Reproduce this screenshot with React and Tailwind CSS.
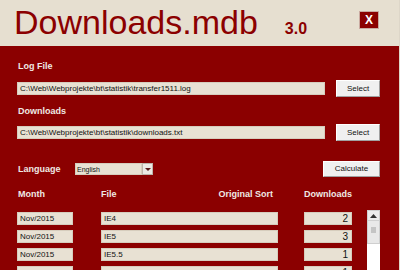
import React from "react";

const font = { fontFamily: '"Liberation Sans", Arial, sans-serif' };

function Btn({ children, w }) {
  return (
    <div
      className={`${w} h-[17px] flex items-center justify-center bg-[#f0f0f0] border border-t-[#ffffff] border-l-[#ffffff] border-r-[#a0a0a0] border-b-[#a0a0a0] text-[8px] text-[#111] leading-none`}
    >
      {children}
    </div>
  );
}

function Field({ children, w, right }) {
  return (
    <div
      className={`${w} h-[13px] bg-[#e8e1d3] border border-[#d6cdbd] flex items-center ${right ? "justify-end pr-[3px]" : "pl-[2px]"} text-[8px] text-[#111] leading-none overflow-hidden whitespace-nowrap`}
    >
      {children}
    </div>
  );
}

const rows = [
  ["Nov/2015", "IE4", "2"],
  ["Nov/2015", "IE5", "3"],
  ["Nov/2015", "IE5.5", "1"],
  ["Nov/2015", "IE6", "1"],
];

export default function App() {
  return (
    <div className="w-[400px] h-[270px] overflow-hidden flex" style={font}>
      <div className="w-[399px] h-full flex flex-col bg-[#8b0000]">
        <div className="h-[46px] shrink-0 bg-[#e6dfd0] flex items-start pl-[14px] pr-[20px]">
          <div className="flex items-baseline pt-[6px]">
            <span className="text-[34px] leading-[33px] text-[#8b0000]">Downloads.mdb</span>
            <span className="ml-[27px] text-[16px] font-bold text-[#8b0000] leading-none">3.0</span>
          </div>
          <div className="ml-auto mt-[11px] w-[20px] h-[18px] bg-[#8b0000] border border-[#c9a9a0] flex items-center justify-center text-white font-bold text-[12px] leading-none">
            X
          </div>
        </div>

        <div className="flex flex-col pl-[17px] pr-[19px] text-[#efe9e4]">
          <div className="mt-[15px] h-[11px] pl-[1px] text-[9px] font-bold leading-[11px]">Log File</div>
          <div className="mt-[8px] h-[17px] flex items-center gap-[11px]">
            <Field w="w-[309px]">C:\Web\Webprojekte\bt\statistik\transfer1511.log</Field>
            <Btn w="w-[44px]">Select</Btn>
          </div>

          <div className="mt-[9px] h-[11px] pl-[1px] text-[9px] font-bold leading-[11px]">Downloads</div>
          <div className="mt-[7px] h-[17px] flex items-center gap-[11px]">
            <Field w="w-[308px]">C:\Web\Webprojekte\bt\statistik\downloads.txt</Field>
            <Btn w="w-[44px]">Select</Btn>
          </div>

          <div className="mt-[20px] h-[16px] flex items-center">
            <div className="w-[58px] pl-[1px] text-[9px] font-bold leading-none">Language</div>
            <div className="flex items-center h-[12px]">
              <div className="w-[67px] h-[12px] bg-[#e8e1d3] border border-[#d6cdbd] text-[7px] text-[#111] leading-none flex items-center pl-[1px]">
                English
              </div>
              <div className="w-[11px] h-[12px] bg-[#ece9e4] border border-[#bdb5aa] flex items-center justify-center">
                <svg width="6" height="3" viewBox="0 0 6 3">
                  <polygon points="0,0 6,0 3,3" fill="#5a1a1a" />
                </svg>
              </div>
            </div>
            <div className="ml-auto">
              <div className="w-[57px] h-[16px] flex items-center justify-center bg-[#f0f0f0] border border-t-[#ffffff] border-l-[#ffffff] border-r-[#a0a0a0] border-b-[#a0a0a0] text-[8px] text-[#111] leading-none">
                Calculate
              </div>
            </div>
          </div>

          <div className="mt-[12px] h-[11px] flex items-center text-[9px] font-bold leading-none">
            <div className="w-[84px] pl-[1px]">Month</div>
            <div className="w-[177px] flex">
              <span>File</span>
              <span className="ml-auto pr-[5px]">Original Sort</span>
            </div>
            <div className="ml-[26px]">Downloads</div>
          </div>

          <div className="mt-[10px] flex">
            <div className="flex flex-col gap-[5px] pt-[2px]">
              {rows.map((r, i) => (
                <div key={i} className="flex items-center">
                  <Field w="w-[56px]">{r[0]}</Field>
                  <div className="ml-[28px]">
                    <Field w="w-[177px]">{r[1]}</Field>
                  </div>
                  <div className="ml-[26px]">
                    <Field w="w-[48px]" right>
                      <span className="text-[10px]">{r[2]}</span>
                    </Field>
                  </div>
                </div>
              ))}
            </div>
            <div className="ml-[15px] w-[13px] h-[60px] bg-white flex flex-col">
              <div className="h-[11px] bg-[#ececec] border border-[#cfcfcf] flex items-center justify-center">
                <svg width="7" height="4" viewBox="0 0 7 4">
                  <polygon points="0,4 7,4 3.5,0" fill="#333" />
                </svg>
              </div>
              <div className="h-[23px] bg-[#e8e8e8] border-x border-b border-[#cfcfcf] flex justify-center pt-[6px]">
                <div className="w-[5px] h-[6px] bg-[#c4c4c4]" />
              </div>
            </div>
          </div>
        </div>
      </div>
      <div className="w-[1px] h-full bg-[#ddd6c8]" />
    </div>
  );
}
